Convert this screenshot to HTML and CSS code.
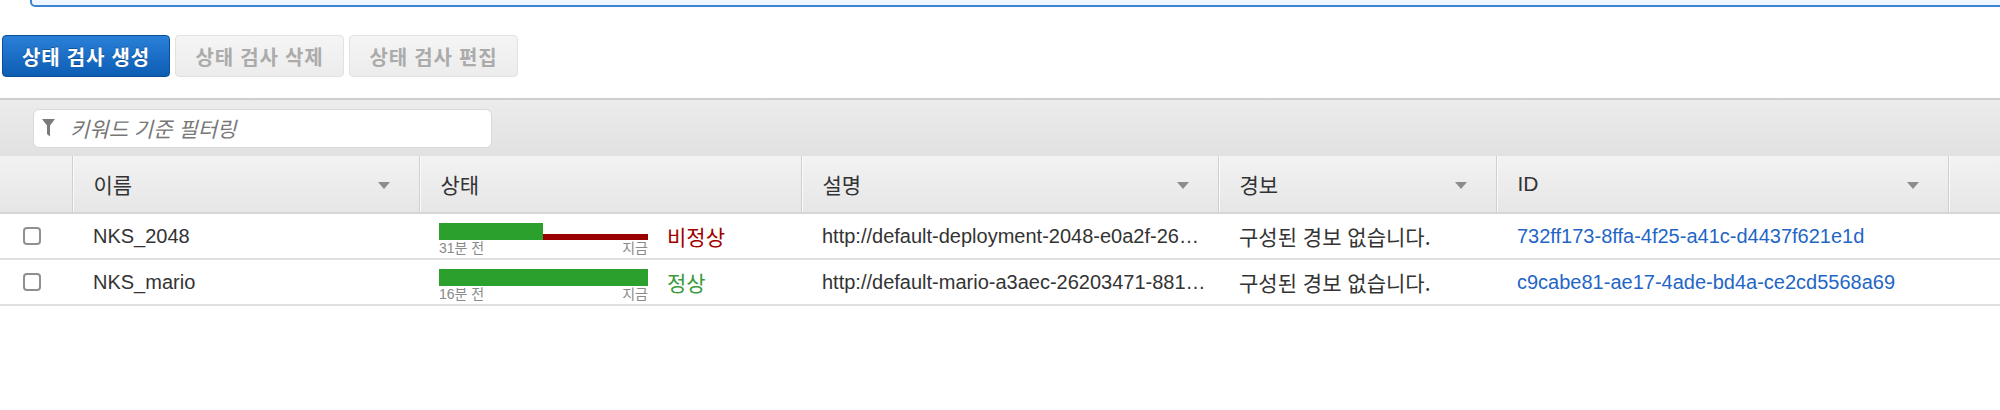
FILE: index.html
```html
<!DOCTYPE html>
<html lang="ko">
<head>
<meta charset="utf-8">
<title>상태 검사</title>
<link rel="stylesheet" href="styles.css">
</head>
<body>
<div class="notice"></div>
<div class="actions">
  <button class="btn btn-primary">상태 검사 생성</button>
  <button class="btn btn-disabled">상태 검사 삭제</button>
  <button class="btn btn-disabled">상태 검사 편집</button>
</div>
<div class="toolbar">
  <div class="filter">
    <svg class="funnel" width="13" height="18" viewBox="0 0 13 18"><path d="M0 0H13L8 6.5V17.5L5 15V6.5Z" fill="#7a7a7a"/></svg>
    <span class="placeholder">키워드 기준 필터링</span>
  </div>
</div>
<table class="grid">
  <colgroup>
    <col class="c-check"><col class="c-name"><col class="c-status"><col class="c-desc"><col class="c-alarm"><col class="c-id"><col class="c-rest">
  </colgroup>
  <thead>
    <tr>
      <th></th>
      <th><div class="th-in"><span>이름</span><i class="sort"></i></div></th>
      <th><div class="th-in"><span>상태</span></div></th>
      <th><div class="th-in"><span>설명</span><i class="sort"></i></div></th>
      <th><div class="th-in"><span>경보</span><i class="sort"></i></div></th>
      <th><div class="th-in"><span>ID</span><i class="sort"></i></div></th>
      <th></th>
    </tr>
  </thead>
  <tbody>
    <tr>
      <td class="chk"><span class="box"></span></td>
      <td>NKS_2048</td>
      <td>
        <div class="status">
          <div class="spark">
            <div class="bars">
              <div class="ok" style="width:104px"></div>
              <div class="bad"></div>
            </div>
            <div class="labels"><span>31분 전</span><span>지금</span></div>
          </div>
          <span class="st-bad">비정상</span>
        </div>
      </td>
      <td>http://default-deployment-2048-e0a2f-26…</td>
      <td class="kr">구성된 경보 없습니다.</td>
      <td><a class="link">732ff173-8ffa-4f25-a41c-d4437f621e1d</a></td>
      <td></td>
    </tr>
    <tr>
      <td class="chk"><span class="box"></span></td>
      <td>NKS_mario</td>
      <td>
        <div class="status">
          <div class="spark">
            <div class="bars">
              <div class="ok full"></div>
            </div>
            <div class="labels"><span>16분 전</span><span>지금</span></div>
          </div>
          <span class="st-ok">정상</span>
        </div>
      </td>
      <td>http://default-mario-a3aec-26203471-881…</td>
      <td class="kr">구성된 경보 없습니다.</td>
      <td><a class="link">c9cabe81-ae17-4ade-bd4a-ce2cd5568a69</a></td>
      <td></td>
    </tr>
  </tbody>
</table>
</body>
</html>
```
FILE: styles.css
```css
html, body {
  margin: 0;
  padding: 0;
  background: #fff;
}
body {
  width: 2000px;
  height: 410px;
  overflow: hidden;
  font-family: "Liberation Sans", Arial, "Noto Sans CJK KR", sans-serif;
  font-size: 20px;
  color: #333;
}
.notice {
  height: 30px;
  margin: -27px -20px 0 30px;
  border: 2px solid #3d84d2;
  border-radius: 5px;
  background: #eef6ff;
}
.actions {
  display: flex;
  gap: 5px;
  padding: 28px 0 0 2px;
  height: 42px;
}
.btn {
  height: 42px;
  border-radius: 4px;
  font-family: "Noto Sans CJK KR", sans-serif;
  font-size: 20px;
  font-weight: 700;
  padding: 0;
  letter-spacing: 0.8px;
}
.btn-primary {
  width: 168px;
  color: #fff;
  background: linear-gradient(#2a80d8, #0d5db4);
  border: 1px solid #0b4f9a;
  text-shadow: 0 -1px 0 rgba(0,0,0,0.3);
}
.btn-disabled {
  width: 169px;
  color: #ababab;
  background: linear-gradient(#f5f5f5, #ececec);
  border: 1px solid #e2e2e2;
}
.toolbar {
  margin-top: 21px;
  height: 56px;
  border-top: 2px solid #cfcfcf;
  background: linear-gradient(#ececec, #e1e1e1);
  padding: 0 0 0 33px;
  display: flex;
  align-items: center;
}
.filter {
  box-sizing: border-box;
  width: 459px;
  height: 39px;
  background: #fff;
  border: 1px solid #d9d9d9;
  border-radius: 6px;
  display: flex;
  align-items: center;
  padding-left: 8px;
  gap: 15px;
}
.funnel {
  flex: none;
}
.placeholder {
  font-family: "Noto Sans CJK KR", sans-serif;
  font-style: italic;
  font-size: 21px;
  color: #777;
}
.grid {
  border-collapse: collapse;
  table-layout: fixed;
  width: 2000px;
}
.c-check { width: 72px; }
.c-name { width: 347px; }
.c-status { width: 382px; }
.c-desc { width: 417px; }
.c-alarm { width: 278px; }
.c-id { width: 452px; }
.c-rest { width: 52px; }
thead th {
  height: 56px;
  padding: 0;
  background: linear-gradient(#f2f2f2, #e6e6e6);
  border-bottom: 2px solid #d6d6d6;
  border-left: 1px solid #d0d0d0;
  box-shadow: inset 1px 0 0 #fafafa;
  font-weight: 400;
  text-align: left;
  font-family: "Noto Sans CJK KR", sans-serif;
  font-size: 21px;
  color: #333;
}
thead th:first-child {
  border-left: none;
  box-shadow: none;
}
.th-in {
  display: flex;
  align-items: center;
  justify-content: space-between;
  padding: 0 29px 0 21px;
}
.th-in span {
  font-family: "Liberation Sans", "Noto Sans CJK KR", sans-serif;
}
.sort {
  width: 0;
  height: 0;
  border-left: 6px solid transparent;
  border-right: 6px solid transparent;
  border-top: 7px solid #8c8c8c;
  margin-top: 2px;
}
tbody td {
  height: 44px;
  padding: 0 0 0 21px;
  border-bottom: 2px solid #e0e0e0;
  white-space: nowrap;
  overflow: hidden;
  vertical-align: middle;
}
tbody td.chk {
  padding: 0 0 0 23px;
}
.box {
  display: block;
  width: 14px;
  height: 14px;
  border: 2px solid #8f8f8f;
  border-radius: 4px;
  background: #fff;
}
.kr {
  font-family: "Noto Sans CJK KR", sans-serif;
  font-size: 21px;
}
.status {
  display: flex;
  align-items: center;
  gap: 19px;
  margin-left: -1px;
}
.spark {
  width: 209px;
  padding-top: 6px;
}
.bars {
  display: flex;
  align-items: flex-end;
  height: 17px;
}
.ok {
  height: 17px;
  background: #2ca02c;
}
.ok.full {
  width: 209px;
}
.bad {
  flex: 1;
  height: 6px;
  background: #990000;
}
.labels {
  display: flex;
  justify-content: space-between;
  font-family: "Liberation Sans", "Noto Sans CJK KR", sans-serif;
  font-size: 14px;
  line-height: 16px;
  color: #8a8a8a;
}
.st-bad, .st-ok {
  font-family: "Noto Sans CJK KR", sans-serif;
  font-size: 21px;
}
.st-bad { color: #a00000; }
.st-ok { color: #3a9a3a; }
.link {
  color: #1f66c6;
  text-decoration: none;
}
```
